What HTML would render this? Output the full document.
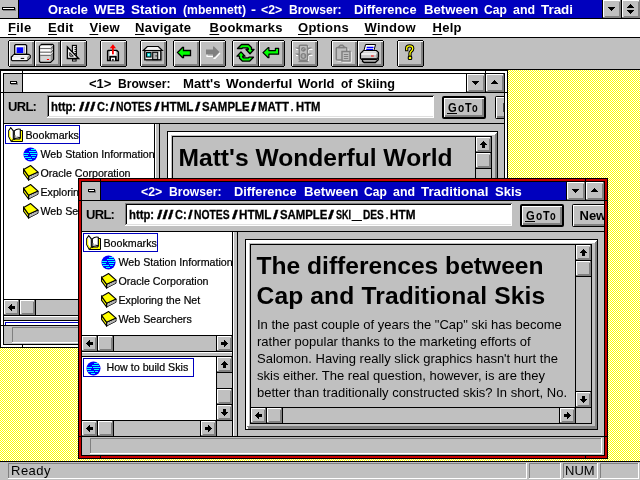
<!DOCTYPE html>
<html><head><meta charset="utf-8"><title>Oracle WEB Station</title>
<style>
html,body{margin:0;padding:0;}
body{width:640px;height:480px;overflow:hidden;position:relative;font-family:"Liberation Sans",sans-serif;background:#ffff80;}
#root{position:absolute;left:0;top:0;width:640px;height:480px;overflow:hidden;will-change:transform;}
#root div,#root i,#root span,#root svg{position:absolute;display:block;}
#mdi{left:0;top:70px;width:640px;height:391px;overflow:hidden;
 background-color:#ffff00;
 background-image:linear-gradient(45deg,#fff 25%,transparent 25%,transparent 75%,#fff 75%),linear-gradient(45deg,#fff 25%,transparent 25%,transparent 75%,#fff 75%);
 background-size:2px 2px;background-position:0 0,1px 1px;}
.rb{background:#c0c0c0;}
.clip{overflow:hidden;}
.child{overflow:hidden;}
.mt{top:19px;height:18px;line-height:18px;font-weight:bold;font-size:13px;color:#000;white-space:pre;letter-spacing:0.27px;}
.mt u{text-decoration:underline;text-decoration-thickness:1px;text-underline-offset:2px;}
.ttl{font-weight:bold;font-size:13px;white-space:pre;line-height:18px;height:18px;color:#fff;}
.ct{font-weight:bold;font-size:13px;white-space:pre;line-height:18px;height:18px;}
.lbl{font-weight:bold;font-size:13px;white-space:pre;line-height:18px;letter-spacing:-0.7px;}
.url{font-weight:bold;font-size:13px;white-space:pre;line-height:18px;}
.tt{font-size:10.67px;white-space:pre;line-height:19px;color:#000;-webkit-text-stroke:0.2px #000;}
.url{-webkit-text-stroke:0.3px #000;}
.tb{width:27px;height:27px;background:#000;}
.tbf{left:1px;top:1px;width:25px;height:25px;background:#c0c0c0;box-shadow:inset 1px 1px 0 #fff,inset -2px -2px 0 #808080;}
.tb svg{left:0;top:0;}
.pb{background:#000;border-radius:2px;}
.pbi{left:2px;top:2px;right:2px;bottom:2px;background:#c0c0c0;box-shadow:inset 1px 1px 0 #fff,inset -2px -2px 0 #808080;}
.pb span{left:6px;top:0;height:100%;white-space:pre;font-weight:bold;font-size:13px;line-height:23px;letter-spacing:-1px;}
.pb u,.pb2 u{text-decoration:underline;text-decoration-thickness:1px;text-underline-offset:1px;}
.gl{font-weight:bold;font-size:13px;line-height:23px;white-space:pre;}
.pb2{background:#000;border-radius:2px;}
.pbi2{left:1px;top:1px;right:1px;bottom:1px;background:#c0c0c0;box-shadow:inset 1px 1px 0 #fff,inset -2px -2px 0 #808080;}
.pb2 span{left:7.5px;top:0;height:100%;white-space:pre;font-weight:bold;font-size:13px;line-height:23px;letter-spacing:0px;}
.h1{font-weight:bold;font-size:24.6px;line-height:30px;white-space:pre;color:#000;}
.bd{font-size:13px;line-height:17.05px;white-space:pre;color:#000;}
.st{font-size:13px;line-height:16px;white-space:pre;color:#000;}
#ready{letter-spacing:0.5px;}
</style></head><body><div id="root">
<div style="left:0px;top:0px;width:640px;height:18px;background:#0000be;"></div>
<div style="left:0px;top:0px;width:18px;height:18px;background:#c0c0c0;"></div>
<div style="left:3px;top:8px;width:13px;height:3px;background:#808080;"></div><div style="left:2px;top:7px;width:13px;height:3px;background:#000;"></div><div style="left:3px;top:8px;width:11px;height:1px;background:#fff;"></div>
<div style="left:18px;top:0px;width:1px;height:18px;background:#000;"></div>
<span class="ttl" style="left:47.50px;top:0.5px;transform:scaleX(0.988);transform-origin:0 0">Oracle</span><span class="ttl" style="left:93.75px;top:0.5px;transform:scaleX(1.029);transform-origin:0 0">WEB</span><span class="ttl" style="left:130.50px;top:0.5px;transform:scaleX(1.038);transform-origin:0 0">Station</span><span class="ttl" style="left:182.50px;top:0.5px;transform:scaleX(0.938);transform-origin:0 0">(mbennett)</span><span class="ttl" style="left:251.25px;top:0.5px;transform:scaleX(1.148);transform-origin:0 0">-</span><span class="ttl" style="left:261.25px;top:0.5px;transform:scaleX(0.948);transform-origin:0 0">&lt;2&gt;</span><span class="ttl" style="left:288.75px;top:0.5px;transform:scaleX(0.932);transform-origin:0 0">Browser:</span><span class="ttl" style="left:353.75px;top:0.5px;transform:scaleX(0.983);transform-origin:0 0">Difference</span><span class="ttl" style="left:423.75px;top:0.5px;transform:scaleX(1.015);transform-origin:0 0">Between</span><span class="ttl" style="left:484.25px;top:0.5px;transform:scaleX(0.926);transform-origin:0 0">Cap</span><span class="ttl" style="left:513.00px;top:0.5px;transform:scaleX(0.951);transform-origin:0 0">and</span><span class="ttl" style="left:540.50px;top:0.5px;transform:scaleX(1.030);transform-origin:0 0">Tradi</span>
<div style="left:602px;top:0px;width:1px;height:18px;background:#000;"></div>
<div class="rb" style="left:603px;top:0px;width:18px;height:18px;"><i style="left:0;top:0;width:18px;height:1px;background:#fff"></i><i style="left:0;top:0;width:1px;height:18px;background:#fff"></i><i style="left:0px;top:17px;width:18px;height:1px;background:#808080"></i><i style="left:17px;top:0px;width:1px;height:18px;background:#808080"></i><i style="left:2px;top:16px;width:16px;height:1px;background:#808080"></i><i style="left:16px;top:2px;width:1px;height:16px;background:#808080"></i><i style="left:5px;top:7px;width:7px;height:1px;background:#000"></i><i style="left:6px;top:8px;width:5px;height:1px;background:#000"></i><i style="left:7px;top:9px;width:3px;height:1px;background:#000"></i><i style="left:8px;top:10px;width:1px;height:1px;background:#000"></i></div>
<div style="left:621px;top:0px;width:1px;height:18px;background:#000;"></div>
<div class="rb" style="left:622px;top:0px;width:18px;height:18px;"><i style="left:0;top:0;width:18px;height:1px;background:#fff"></i><i style="left:0;top:0;width:1px;height:18px;background:#fff"></i><i style="left:0px;top:17px;width:18px;height:1px;background:#808080"></i><i style="left:17px;top:0px;width:1px;height:18px;background:#808080"></i><i style="left:2px;top:16px;width:16px;height:1px;background:#808080"></i><i style="left:16px;top:2px;width:1px;height:16px;background:#808080"></i><i style="left:8px;top:4px;width:1px;height:1px;background:#000"></i><i style="left:7px;top:5px;width:3px;height:1px;background:#000"></i><i style="left:6px;top:6px;width:5px;height:1px;background:#000"></i><i style="left:5px;top:7px;width:7px;height:1px;background:#000"></i><i style="left:5px;top:10px;width:7px;height:1px;background:#000"></i><i style="left:6px;top:11px;width:5px;height:1px;background:#000"></i><i style="left:7px;top:12px;width:3px;height:1px;background:#000"></i><i style="left:8px;top:13px;width:1px;height:1px;background:#000"></i></div>
<div style="left:0px;top:18px;width:640px;height:1px;background:#000;"></div>
<div style="left:0px;top:19px;width:640px;height:18px;background:#fff;"></div>
<span class="mt" id="m0" style="left:8px"><u>F</u>ile</span>
<span class="mt" id="m1" style="left:48px"><u>E</u>dit</span>
<span class="mt" id="m2" style="left:89.5px"><u>V</u>iew</span>
<span class="mt" id="m3" style="left:135px"><u>N</u>avigate</span>
<span class="mt" id="m4" style="left:209.5px"><u>B</u>ookmarks</span>
<span class="mt" id="m5" style="left:298px"><u>O</u>ptions</span>
<span class="mt" id="m6" style="left:364.5px"><u>W</u>indow</span>
<span class="mt" id="m7" style="left:432.5px"><u>H</u>elp</span>
<div style="left:0px;top:37px;width:640px;height:1px;background:#000;"></div>
<div style="left:0px;top:38px;width:640px;height:31px;background:#c0c0c0;"></div>
<div class="tb" style="left:8px;top:40px"><div class="tbf"></div><svg width="27" height="27" viewBox="0 0 27 27"><path d="M6.700 5.500 L7.700 4.600 L17.600 4.600 L18.600 5.500 L18.600 14.300 L6.700 14.300 Z" fill="#fff" stroke="#000" stroke-width="1.300"/><path d="M16.300 6.500 L16.300 13.400 L8 13.400" fill="none" stroke="#b0b0b0" stroke-width="1.400"/><rect x="8.600" y="7.300" width="6.600" height="5.700" fill="#0000ff"/><path d="M3.400 17 L6.200 14.300 L20.800 14.300 L22.200 15.600 L22.200 17.600 L19 20.700 L4.300 20.700 L3.400 19.800 Z" fill="#e0e0e0" stroke="#000" stroke-width="1.300"/><path d="M19 17.200 L21.600 15 L21.600 17.600 L19 20.200 Z" fill="#909090"/><rect x="4.200" y="17.200" width="14.600" height="2.900" fill="#f8f8f8"/><path d="M5.500 15.800 L19.500 15.800" stroke="#fff" stroke-width="1"/><rect x="12.700" y="17.900" width="3.500" height="1" fill="#000"/></svg></div>
<div class="tb" style="left:34px;top:40px"><div class="tbf"></div><svg width="27" height="27" viewBox="0 0 27 27"><path d="M5.500 6.500 L7.500 4.500 L18.700 4.500 L19.600 5.400 L19.600 19.200 L16.500 22.400 L6.400 22.400 L5.500 21.500 Z" fill="#d4d4d4" stroke="#000" stroke-width="1.300"/><path d="M16.700 7 L19 4.800 L19 19 L16.700 21.600 Z" fill="#909090"/><rect x="6.200" y="5.600" width="10.400" height="2.200" fill="#fff"/><rect x="6.200" y="9.300" width="10.400" height="2.200" fill="#fff"/><rect x="6.200" y="13" width="10.400" height="1.600" fill="#fff"/><path d="M6.200 8.500 L16.600 8.500 L19 6.200 M6.200 12.200 L16.600 12.200 L19 9.900 M6.200 15.400 L16.600 15.400 L19 13.200" stroke="#606060" stroke-width="0.900" fill="none"/><path d="M16.600 7.500 L19 5.200 M16.600 11.200 L19 8.900 M16.600 14.500 L19 12.200" stroke="#fff" stroke-width="0.700"/><rect x="12.900" y="19" width="2.200" height="1" fill="#ff0000"/></svg></div>
<div class="tb" style="left:60px;top:40px"><div class="tbf"></div><svg width="27" height="27" viewBox="0 0 27 27"><rect x="12.400" y="5.400" width="4" height="13" fill="#e8e8e8" stroke="#000" stroke-width="1.100"/><path d="M14.500 7.500h1.800M14.500 9.500h1.800M14.500 11.500h1.800M14.500 13.500h1.800" stroke="#000" stroke-width="0.900"/><path d="M7.400 7 L7.400 18.500 L18.600 18.500 Z" fill="#fff" stroke="#000" stroke-width="1.400"/><path d="M9.800 12.500 L9.800 16.200 L13.400 16.200 Z" fill="#c0c0c0" stroke="#000" stroke-width="0.900"/><rect x="12.500" y="19.200" width="3.600" height="1.800" fill="#fff" stroke="#000" stroke-width="1"/></svg></div>
<div class="tb" style="left:100px;top:40px"><div class="tbf"></div><svg width="27" height="27" viewBox="0 0 27 27"><path d="M7.600 11 L8.200 10.500 L16.800 10.500 L18.400 12 L18.400 20.500 L7.600 20.500 Z" fill="#c0c0c0" stroke="#000" stroke-width="1.400"/><rect x="9.800" y="11" width="6" height="4.200" fill="#fff"/><rect x="9.300" y="16" width="7.400" height="4.800" fill="#000"/><rect x="11" y="17.600" width="4" height="3" fill="#fff"/><rect x="12.200" y="19" width="1.400" height="1.800" fill="#000"/><rect x="12" y="7" width="1.800" height="7.300" fill="#ff0000"/><path d="M12.900 4.300 L16 8.200 L9.800 8.200 Z" fill="#ff0000"/></svg></div>
<div class="tb" style="left:140px;top:40px"><div class="tbf"></div><svg width="27" height="27" viewBox="0 0 27 27"><path d="M6 20.800 L21.800 20.800 L21.800 12" fill="none" stroke="#808080" stroke-width="1"/><path d="M3.300 10.500 L7.300 6.500 L18.300 6.500 L22.300 10.500 Z" fill="#f0f0f0" stroke="#000" stroke-width="1.200"/><rect x="4.800" y="10.600" width="16" height="9.200" fill="#f0f0f0" stroke="#000" stroke-width="1.300"/><rect x="6.600" y="12.600" width="4.400" height="4.400" fill="#00e8e8" stroke="#000" stroke-width="1.100"/><rect x="8.100" y="14.100" width="1.400" height="1.400" fill="#fff"/><rect x="12.700" y="12.300" width="5" height="7.300" fill="#b4b4b4" stroke="#000" stroke-width="1.100"/><rect x="15.600" y="15.300" width="1" height="1.200" fill="#000"/></svg></div>
<div class="tb" style="left:173px;top:40px"><div class="tbf"></div><svg width="27" height="27" viewBox="0 0 27 27"><path d="M4.500 12.500 L9.500 7.500 L10.500 7.500 L10.500 10.500 L17.500 10.500 L17.500 15.500 L10.500 15.500 L10.500 17.500 L9.500 17.500 Z" fill="#00ff00" stroke="#000" stroke-width="1.3"/></svg></div>
<div class="tb" style="left:199px;top:40px"><div class="tbf"></div><svg width="27" height="27" viewBox="0 0 27 27"><path d="M21 13 L16 18.500 L15 18.500 L15 16.500 L8 16.500 L8 14" fill="none" stroke="#fff" stroke-width="1.2"/><path d="M20.500 12 L15 6.500 L14 6.500 L14 9.500 L7 9.500 L7 14.500 L14 14.500 L14 17.500 L15 17.500 Z" fill="#808080"/></svg></div>
<div class="tb" style="left:232px;top:40px"><div class="tbf"></div><svg width="27" height="27" viewBox="0 0 27 27"><path d="M5.5 8.5 L9.5 4.5 L16.5 4.5 L19.5 7.5 L19.5 9.5 L22.0 9.5 L18.0 13.8 L14.0 9.5 L16.3 9.5 L16.3 8.6 L15.4 7.8 L10.8 7.8 L10.0 8.5 Z" fill="#00ff00" stroke="#000" stroke-width="1.3" stroke-linejoin="round"/><path d="M21.5 17.2 L17.5 21.2 L10.5 21.2 L7.5 18.2 L7.5 16.2 L5.0 16.2 L9.0 11.9 L13.0 16.2 L10.7 16.2 L10.7 17.1 L11.6 17.9 L16.2 17.9 L17.0 17.2 Z" fill="#00ff00" stroke="#000" stroke-width="1.3" stroke-linejoin="round"/></svg></div>
<div class="tb" style="left:258px;top:40px"><div class="tbf"></div><svg width="27" height="27" viewBox="0 0 27 27"><path d="M5.0 12.6 L10.2 7.6 L10.9 7.6 L10.9 10.6 L17.4 10.6 L17.4 8.3 L20.6 8.3 L20.6 14.2 L10.9 14.2 L10.9 17.7 L10.2 17.7 Z" fill="#00ff00" stroke="#000" stroke-width="1.2" stroke-linejoin="round"/></svg></div>
<div class="tb" style="left:291px;top:40px"><div class="tbf"></div><svg width="27" height="27" viewBox="0 0 27 27"><g transform="translate(1,1)" fill="none" stroke="#fff" stroke-width="1.200"><rect x="8.300" y="5.300" width="8.200" height="15" rx="1"/><path d="M4 8.500h4M4 14.500h4M17 8.500h3.500M17 14.500h3.500"/></g><rect x="8.300" y="5.300" width="8.200" height="15" rx="1" fill="#c0c0c0" stroke="#808080" stroke-width="1.500"/><circle cx="12.400" cy="9.300" r="2.400" fill="#808080"/><path d="M11.200 10 L13.500 8" stroke="#c0c0c0" stroke-width="0.800"/><circle cx="12.400" cy="16" r="2.300" fill="#c0c0c0" stroke="#808080" stroke-width="1.200"/><path d="M11.400 15.300h0.900M13 15.300h0.900M11.400 16.900h0.900M13 16.900h0.900" stroke="#808080" stroke-width="0.900"/><path d="M4 7.500h4l0 2.300zM4 13.500h4l0 2.300zM21 7.500h-4l0 2.300zM21 13.500h-4l0 2.300z" fill="#808080"/><path d="M7.500 21.500h10" stroke="#808080" stroke-width="1.300"/></svg></div>
<div class="tb" style="left:331px;top:40px"><div class="tbf"></div><svg width="27" height="27" viewBox="0 0 27 27"><g transform="translate(1,1)" fill="none" stroke="#fff" stroke-width="1.200"><rect x="5.300" y="7.500" width="10.500" height="12.500" rx="1"/><rect x="11" y="11.500" width="8" height="9.500"/></g><rect x="5.300" y="7.500" width="10.500" height="12.500" rx="1" fill="#c0c0c0" stroke="#808080" stroke-width="1.500"/><path d="M8 7.500 L8 6.500 L9.500 5.200 L11.600 5.200 L13 6.500 L13 7.500 Z" fill="#c0c0c0" stroke="#808080" stroke-width="1.400"/><rect x="11" y="11.500" width="8" height="9.500" fill="#c0c0c0" stroke="#808080" stroke-width="1.500"/><path d="M12.800 14.500h4.500M12.800 16.500h4.500M12.800 18.500h4.500" stroke="#808080" stroke-width="1.100"/></svg></div>
<div class="tb" style="left:357px;top:40px"><div class="tbf"></div><svg width="27" height="27" viewBox="0 0 27 27"><path d="M5.500 19.500 L5.500 21.300 L7.200 22.500 L18.300 22.500 L21.300 19.700 L21.300 17.500" fill="#b0b0b0" stroke="#000" stroke-width="1.300"/><path d="M8.600 4.500 L18.600 4.500 L16.600 11.500 L6.600 11.500 Z" fill="#fff" stroke="#000" stroke-width="1"/><path d="M9.700 7.300h6.800M9.200 9.400h6.800" stroke="#0000ff" stroke-width="1.200"/><path d="M3.500 13.500 L6.500 10.500 L19.500 10.500 L21.500 12.500 L21.500 17 L19.300 19.300 L4.500 19.300 L3.500 18.300 Z" fill="#c8c8c8" stroke="#000" stroke-width="1.200"/><path d="M4.300 14h15" stroke="#fff" stroke-width="1.300"/><path d="M6.800 11.800h12" stroke="#e8e8e8" stroke-width="1.200"/><path d="M19.500 14 L21 12.600 L21 16.800 L19.500 18.500 Z" fill="#808080"/><rect x="14" y="15.500" width="2.800" height="1" fill="#ff0000"/><path d="M4.500 18.900h15" stroke="#000" stroke-width="1.300"/></svg></div>
<div class="tb" style="left:397px;top:40px"><div class="tbf"></div><svg width="27" height="27" viewBox="0 0 27 27"><path d="M9.700 9.500 L9.700 8.200 Q9.700 5.800 12.700 5.800 Q15.700 5.800 15.700 8.400 Q15.700 10 14.200 11.300 Q13 12.300 13 13.600 L13 15" fill="none" stroke="#000" stroke-width="3.300" stroke-linecap="square"/><path d="M9.700 9.500 L9.700 8.200 Q9.700 5.800 12.700 5.800 Q15.700 5.800 15.700 8.400 Q15.700 10 14.200 11.300 Q13 12.300 13 13.600 L13 15" fill="none" stroke="#ffff00" stroke-width="1.300" stroke-linecap="square"/><rect x="11.300" y="16.300" width="3.400" height="3.200" rx="0.800" fill="#ffff00" stroke="#000" stroke-width="1.100"/></svg></div>
<div style="left:8px;top:40px;width:1px;height:1px;background:#c0c0c0;"></div>
<div style="left:8px;top:66px;width:1px;height:1px;background:#c0c0c0;"></div>
<div style="left:86px;top:40px;width:1px;height:1px;background:#c0c0c0;"></div>
<div style="left:86px;top:66px;width:1px;height:1px;background:#c0c0c0;"></div>
<div style="left:100px;top:40px;width:1px;height:1px;background:#c0c0c0;"></div>
<div style="left:100px;top:66px;width:1px;height:1px;background:#c0c0c0;"></div>
<div style="left:126px;top:40px;width:1px;height:1px;background:#c0c0c0;"></div>
<div style="left:126px;top:66px;width:1px;height:1px;background:#c0c0c0;"></div>
<div style="left:140px;top:40px;width:1px;height:1px;background:#c0c0c0;"></div>
<div style="left:140px;top:66px;width:1px;height:1px;background:#c0c0c0;"></div>
<div style="left:166px;top:40px;width:1px;height:1px;background:#c0c0c0;"></div>
<div style="left:166px;top:66px;width:1px;height:1px;background:#c0c0c0;"></div>
<div style="left:173px;top:40px;width:1px;height:1px;background:#c0c0c0;"></div>
<div style="left:173px;top:66px;width:1px;height:1px;background:#c0c0c0;"></div>
<div style="left:225px;top:40px;width:1px;height:1px;background:#c0c0c0;"></div>
<div style="left:225px;top:66px;width:1px;height:1px;background:#c0c0c0;"></div>
<div style="left:232px;top:40px;width:1px;height:1px;background:#c0c0c0;"></div>
<div style="left:232px;top:66px;width:1px;height:1px;background:#c0c0c0;"></div>
<div style="left:284px;top:40px;width:1px;height:1px;background:#c0c0c0;"></div>
<div style="left:284px;top:66px;width:1px;height:1px;background:#c0c0c0;"></div>
<div style="left:291px;top:40px;width:1px;height:1px;background:#c0c0c0;"></div>
<div style="left:291px;top:66px;width:1px;height:1px;background:#c0c0c0;"></div>
<div style="left:317px;top:40px;width:1px;height:1px;background:#c0c0c0;"></div>
<div style="left:317px;top:66px;width:1px;height:1px;background:#c0c0c0;"></div>
<div style="left:331px;top:40px;width:1px;height:1px;background:#c0c0c0;"></div>
<div style="left:331px;top:66px;width:1px;height:1px;background:#c0c0c0;"></div>
<div style="left:383px;top:40px;width:1px;height:1px;background:#c0c0c0;"></div>
<div style="left:383px;top:66px;width:1px;height:1px;background:#c0c0c0;"></div>
<div style="left:397px;top:40px;width:1px;height:1px;background:#c0c0c0;"></div>
<div style="left:397px;top:66px;width:1px;height:1px;background:#c0c0c0;"></div>
<div style="left:423px;top:40px;width:1px;height:1px;background:#c0c0c0;"></div>
<div style="left:423px;top:66px;width:1px;height:1px;background:#c0c0c0;"></div>
<div style="left:0px;top:69px;width:640px;height:1px;background:#000;"></div>
<div id="mdi">
<div class="child" style="left:0px;top:0px;width:508px;height:278px;background:#000"><div style="left:1px;top:1px;width:506px;height:276px;background:#fff;"></div><div style="left:3px;top:3px;width:502px;height:272px;background:#000;"></div><div style="left:22px;top:1px;width:1px;height:2px;background:#000;"></div><div style="left:22px;top:275px;width:1px;height:2px;background:#000;"></div><div style="left:485px;top:1px;width:1px;height:2px;background:#000;"></div><div style="left:485px;top:275px;width:1px;height:2px;background:#000;"></div><div style="left:1px;top:22px;width:2px;height:1px;background:#000;"></div><div style="left:505px;top:22px;width:2px;height:1px;background:#000;"></div><div style="left:1px;top:255px;width:2px;height:1px;background:#000;"></div><div style="left:505px;top:255px;width:2px;height:1px;background:#000;"></div><div class="clip" style="left:4px;top:4px;width:500px;height:270px"><div style="left:-4px;top:-4px;width:508px;height:278px"><div style="left:4px;top:4px;width:500px;height:270px;background:#c0c0c0;"></div><div style="left:4px;top:4px;width:18px;height:18px;background:#c0c0c0;"></div><div style="left:11px;top:12px;width:7px;height:3px;background:#808080;"></div><div style="left:10px;top:11px;width:7px;height:3px;background:#000;"></div><div style="left:11px;top:12px;width:5px;height:1px;background:#fff;"></div><div style="left:22px;top:4px;width:1px;height:18px;background:#000;"></div><div style="left:23px;top:4px;width:443px;height:18px;background:#fff;"></div><span class="ct" style="color:#000;left:88.75px;top:4.7px;transform:scaleX(1.003);transform-origin:0 0">&lt;1&gt;</span><span class="ct" style="color:#000;left:117.50px;top:4.7px;transform:scaleX(0.932);transform-origin:0 0">Browser:</span><span class="ct" style="color:#000;left:182.50px;top:4.7px;transform:scaleX(1.012);transform-origin:0 0">Matt's</span><span class="ct" style="color:#000;left:226.25px;top:4.7px;transform:scaleX(1.035);transform-origin:0 0">Wonderful</span><span class="ct" style="color:#000;left:298.00px;top:4.7px;transform:scaleX(0.997);transform-origin:0 0">World</span><span class="ct" style="color:#000;left:341.25px;top:4.7px;transform:scaleX(0.916);transform-origin:0 0">of</span><span class="ct" style="color:#000;left:357.00px;top:4.7px;transform:scaleX(0.974);transform-origin:0 0">Skiing</span><div style="left:466px;top:4px;width:1px;height:18px;background:#000;"></div><div class="rb" style="left:467px;top:4px;width:18px;height:18px;"><i style="left:0;top:0;width:18px;height:1px;background:#fff"></i><i style="left:0;top:0;width:1px;height:18px;background:#fff"></i><i style="left:0px;top:17px;width:18px;height:1px;background:#808080"></i><i style="left:17px;top:0px;width:1px;height:18px;background:#808080"></i><i style="left:2px;top:16px;width:16px;height:1px;background:#808080"></i><i style="left:16px;top:2px;width:1px;height:16px;background:#808080"></i><i style="left:5px;top:7px;width:7px;height:1px;background:#000"></i><i style="left:6px;top:8px;width:5px;height:1px;background:#000"></i><i style="left:7px;top:9px;width:3px;height:1px;background:#000"></i><i style="left:8px;top:10px;width:1px;height:1px;background:#000"></i></div><div style="left:485px;top:4px;width:1px;height:18px;background:#000;"></div><div class="rb" style="left:486px;top:4px;width:18px;height:18px;"><i style="left:0;top:0;width:18px;height:1px;background:#fff"></i><i style="left:0;top:0;width:1px;height:18px;background:#fff"></i><i style="left:0px;top:17px;width:18px;height:1px;background:#808080"></i><i style="left:17px;top:0px;width:1px;height:18px;background:#808080"></i><i style="left:2px;top:16px;width:16px;height:1px;background:#808080"></i><i style="left:16px;top:2px;width:1px;height:16px;background:#808080"></i><i style="left:8px;top:6px;width:1px;height:1px;background:#000"></i><i style="left:7px;top:7px;width:3px;height:1px;background:#000"></i><i style="left:6px;top:8px;width:5px;height:1px;background:#000"></i><i style="left:5px;top:9px;width:7px;height:1px;background:#000"></i></div><div style="left:4px;top:22px;width:500px;height:1px;background:#000;"></div><span class="lbl" style="left:8px;top:28px">URL:</span><div style="left:47px;top:25px;width:387px;height:23px;background:#808080;"></div><div style="left:48px;top:26px;width:386px;height:22px;background:#000;"></div><div style="left:49px;top:27px;width:385px;height:21px;background:#fff;"></div><div style="left:48px;top:46px;width:386px;height:1px;background:#dfdfdf;"></div><div style="left:47px;top:47px;width:387px;height:1px;background:#fff;"></div><div style="left:433px;top:26px;width:1px;height:22px;background:#fff;"></div><div style="left:49px;top:27px;width:384px;height:19px;background:#fff;"></div><span class="url" style="left:51.30px;top:28px;transform:scaleX(0.870);transform-origin:0 0">http:</span><span class="url" style="left:78.60px;top:28px;transform:scaleX(1.511);transform-origin:0 0">///</span><span class="url" style="left:96.60px;top:28px;transform:scaleX(0.846);transform-origin:0 0">C:</span><span class="url" style="left:110.00px;top:28px;transform:scaleX(1.291);transform-origin:0 0">/</span><span class="url" style="left:116.30px;top:28px;transform:scaleX(0.797);transform-origin:0 0">NOTES</span><span class="url" style="left:153.70px;top:28px;transform:scaleX(1.621);transform-origin:0 0">/</span><span class="url" style="left:161.30px;top:28px;transform:scaleX(0.901);transform-origin:0 0">HTML</span><span class="url" style="left:195.00px;top:28px;transform:scaleX(1.484);transform-origin:0 0">/</span><span class="url" style="left:202.00px;top:28px;transform:scaleX(0.879);transform-origin:0 0">SAMPLE</span><span class="url" style="left:250.70px;top:28px;transform:scaleX(1.511);transform-origin:0 0">/</span><span class="url" style="left:258.00px;top:28px;transform:scaleX(0.882);transform-origin:0 0">MATT</span><span class="url" style="left:291.20px;top:28px;transform:scaleX(0.604);transform-origin:0 0">.</span><span class="url" style="left:295.60px;top:28px;transform:scaleX(0.867);transform-origin:0 0">HTM</span><div class="pb" style="left:442px;top:26px;width:44px;height:23px"><div class="pbi"></div><span class="gl" style="left:5.90px;top:0px;transform:scaleX(0.858);transform-origin:0 0">G</span><span class="gl" style="left:15.90px;top:0px;transform:scaleX(0.782);transform-origin:0 0">o</span><span class="gl" style="left:23.00px;top:0px;transform:scaleX(0.832);transform-origin:0 0">T</span><span class="gl" style="left:30.25px;top:0px;transform:scaleX(0.712);transform-origin:0 0">o</span><i style="left:5px;top:17px;width:10px;height:1px;background:#000"></i></div><div class="pb2" style="left:495px;top:26px;width:44px;height:23px"><div class="pbi2"></div><span>New</span></div><div style="left:4px;top:53px;width:500px;height:1px;background:#000;"></div><div style="left:4px;top:54px;width:150px;height:175px;background:#fff;"></div><div class="clip" style="left:4px;top:54px;width:150px;height:175px"><div style="left:1px;top:1px;width:73px;height:17px;border:1px solid #0000c0;background:#fff"></div><svg class="ic" style="left:4px;top:3px" width="16" height="16" viewBox="0 0 16 16"><path d="M12 3.500 L14.500 3.500 L14.500 14.500 L3.500 14.500 L3 12 L12 12 Z" fill="#ffff00" stroke="#000" stroke-width="1"/><path d="M0.700 3.500 L2.700 0.700 L5.300 3.800 L5.300 12 L3.200 14.300 L0.700 9.500 Z" fill="#fff" stroke="#000" stroke-width="1.100"/><path d="M1.700 4 L1.700 9.300 L3.400 12.600 L4.600 11.600" fill="none" stroke="#ffff00" stroke-width="1.100"/><path d="M6.300 3.800 Q9 1.300 12.300 2.300 L12.300 10.800 Q9 10 6.300 12.200 Z" fill="#fff" stroke="#000" stroke-width="1.100"/><path d="M7.300 8 L7.300 10.500 L10.500 9.700" fill="none" stroke="#b0b0b0" stroke-width="1.200"/></svg><span class="tt" style="left:21.5px;top:1.7px;font-size:10.67px;letter-spacing:0px">Bookmarks</span><svg class="ic" style="left:18.5px;top:22.5px" width="15" height="15" viewBox="0 0 15 15"><circle cx="7.5" cy="7.5" r="7" fill="#0000ff"/><g stroke="#00ffff" stroke-width="1"><path d="M8 2.5h4M6 4.5h7M1 6.5h5M7 6.5h7M1 8.5h4M8 8.5h5M2 10.5h6M9 10.5h3M5 12.5h4"/></g></svg><span class="tt" style="left:36.5px;top:20.7px;font-size:10.67px;letter-spacing:0px">Web Station Information</span><svg class="ic" style="left:19px;top:41px" width="16" height="16" viewBox="0 0 16 16"><path d="M5.600 11.300 L15 7 L15 10.200 L5.600 15 Z" fill="#fff" stroke="#000" stroke-width="1"/><path d="M6.200 12.700 L14.600 8.700 M6.200 14 L14.600 9.900" stroke="#909090" stroke-width="0.900" fill="none"/><path d="M0.600 4.400 L5.600 11.300 L5.600 15 L0.600 8.300 Z" fill="#ffff00" stroke="#000" stroke-width="1.100"/><path d="M0.600 4.400 L7.600 0.500 L15 7 L5.600 11.300 Z" fill="#ffff00" stroke="#000" stroke-width="1.100"/></svg><span class="tt" style="left:36.5px;top:39.7px;font-size:10.67px;letter-spacing:0px">Oracle Corporation</span><svg class="ic" style="left:19px;top:60px" width="16" height="16" viewBox="0 0 16 16"><path d="M5.600 11.300 L15 7 L15 10.200 L5.600 15 Z" fill="#fff" stroke="#000" stroke-width="1"/><path d="M6.200 12.700 L14.600 8.700 M6.200 14 L14.600 9.900" stroke="#909090" stroke-width="0.900" fill="none"/><path d="M0.600 4.400 L5.600 11.300 L5.600 15 L0.600 8.300 Z" fill="#ffff00" stroke="#000" stroke-width="1.100"/><path d="M0.600 4.400 L7.600 0.500 L15 7 L5.600 11.300 Z" fill="#ffff00" stroke="#000" stroke-width="1.100"/></svg><span class="tt" style="left:36.5px;top:58.7px;font-size:10.67px;letter-spacing:0px">Exploring the Net</span><svg class="ic" style="left:19px;top:79px" width="16" height="16" viewBox="0 0 16 16"><path d="M5.600 11.300 L15 7 L15 10.200 L5.600 15 Z" fill="#fff" stroke="#000" stroke-width="1"/><path d="M6.200 12.700 L14.600 8.700 M6.200 14 L14.600 9.900" stroke="#909090" stroke-width="0.900" fill="none"/><path d="M0.600 4.400 L5.600 11.300 L5.600 15 L0.600 8.300 Z" fill="#ffff00" stroke="#000" stroke-width="1.100"/><path d="M0.600 4.400 L7.600 0.500 L15 7 L5.600 11.300 Z" fill="#ffff00" stroke="#000" stroke-width="1.100"/></svg><span class="tt" style="left:36.5px;top:77.7px;font-size:10.67px;letter-spacing:0px">Web Searchers</span></div><div style="left:4px;top:229px;width:150px;height:1px;background:#000;"></div><div style="left:4px;top:230px;width:150px;height:15px;background:#c0c0c0;"></div><div class="rb" style="left:4px;top:230px;width:15px;height:15px;"><i style="left:0;top:0;width:15px;height:1px;background:#fff"></i><i style="left:0;top:0;width:1px;height:15px;background:#fff"></i><i style="left:0px;top:14px;width:15px;height:1px;background:#808080"></i><i style="left:14px;top:0px;width:1px;height:15px;background:#808080"></i><i style="left:2px;top:13px;width:13px;height:1px;background:#808080"></i><i style="left:13px;top:2px;width:1px;height:13px;background:#808080"></i><i style="left:4px;top:7px;width:1px;height:1px;background:#000"></i><i style="left:5px;top:6px;width:1px;height:3px;background:#000"></i><i style="left:6px;top:5px;width:1px;height:5px;background:#000"></i><i style="left:7px;top:4px;width:1px;height:7px;background:#000"></i><i style="left:8px;top:6px;width:1px;height:3px;background:#000"></i><i style="left:9px;top:6px;width:1px;height:3px;background:#000"></i><i style="left:10px;top:6px;width:1px;height:3px;background:#000"></i></div><div style="left:19px;top:230px;width:1px;height:15px;background:#000;"></div><div class="rb" style="left:20px;top:230px;width:15px;height:15px;"><i style="left:0;top:0;width:15px;height:1px;background:#fff"></i><i style="left:0;top:0;width:1px;height:15px;background:#fff"></i><i style="left:0px;top:14px;width:15px;height:1px;background:#808080"></i><i style="left:14px;top:0px;width:1px;height:15px;background:#808080"></i><i style="left:2px;top:13px;width:13px;height:1px;background:#808080"></i><i style="left:13px;top:2px;width:1px;height:13px;background:#808080"></i></div><div style="left:35px;top:230px;width:1px;height:15px;background:#000;"></div><div style="left:138px;top:230px;width:1px;height:15px;background:#000;"></div><div class="rb" style="left:139px;top:230px;width:15px;height:15px;"><i style="left:0;top:0;width:15px;height:1px;background:#fff"></i><i style="left:0;top:0;width:1px;height:15px;background:#fff"></i><i style="left:0px;top:14px;width:15px;height:1px;background:#808080"></i><i style="left:14px;top:0px;width:1px;height:15px;background:#808080"></i><i style="left:2px;top:13px;width:13px;height:1px;background:#808080"></i><i style="left:13px;top:2px;width:1px;height:13px;background:#808080"></i><i style="left:10px;top:7px;width:1px;height:1px;background:#000"></i><i style="left:9px;top:6px;width:1px;height:3px;background:#000"></i><i style="left:8px;top:5px;width:1px;height:5px;background:#000"></i><i style="left:7px;top:4px;width:1px;height:7px;background:#000"></i><i style="left:6px;top:6px;width:1px;height:3px;background:#000"></i><i style="left:5px;top:6px;width:1px;height:3px;background:#000"></i><i style="left:4px;top:6px;width:1px;height:3px;background:#000"></i></div><div style="left:4px;top:245px;width:150px;height:1px;background:#000;"></div><div style="left:4px;top:246px;width:150px;height:1px;background:#fff;"></div><div style="left:4px;top:247px;width:150px;height:3px;background:#c0c0c0;"></div><div style="left:4px;top:250px;width:150px;height:1px;background:#000;"></div><div class="clip" style="left:4px;top:251px;width:150px;height:4px;background:#fff"><div style="left:1px;top:1px;width:109px;height:17px;border:1px solid #0000c0"></div><svg class="ic" style="left:3.5px;top:3.5px" width="15" height="15" viewBox="0 0 15 15"><circle cx="7.5" cy="7.5" r="7" fill="#0000ff"/><g stroke="#00ffff" stroke-width="1"><path d="M8 2.5h4M6 4.5h7M1 6.5h5M7 6.5h7M1 8.5h4M8 8.5h5M2 10.5h6M9 10.5h3M5 12.5h4"/></g></svg><span class="tt" style="left:24.5px;top:1.2px;font-size:10.67px">How to build Skis</span></div><div style="left:4px;top:255px;width:500px;height:1px;background:#000;"></div><div style="left:4px;top:256px;width:500px;height:18px;background:#c0c0c0;"></div><div style="left:12px;top:257px;width:490px;height:1px;background:#808080;"></div><div style="left:12px;top:257px;width:1px;height:16px;background:#808080;"></div><div style="left:12px;top:272px;width:490px;height:1px;background:#fff;"></div><div style="left:501px;top:257px;width:1px;height:16px;background:#fff;"></div><div style="left:154px;top:54px;width:1px;height:201px;background:#000;"></div><div style="left:155px;top:54px;width:1px;height:201px;background:#fff;"></div><div style="left:156px;top:54px;width:3px;height:201px;background:#c0c0c0;"></div><div style="left:159px;top:54px;width:1px;height:201px;background:#000;"></div><div style="left:160px;top:54px;width:344px;height:201px;background:#c0c0c0;"></div><div class="clip" style="left:167px;top:61px;width:331px;height:188px;background:#000"><div style="left:1px;top:1px;width:329px;height:186px;background:#c0c0c0;"></div><div style="left:1px;top:1px;width:329px;height:3px;background:#fff;"></div><div style="left:1px;top:1px;width:3px;height:186px;background:#fff;"></div><div style="left:328px;top:2px;width:2px;height:185px;background:#808080;"></div><div style="left:2px;top:184px;width:328px;height:3px;background:#808080;"></div><div style="left:328px;top:1px;width:2px;height:1px;background:#fff;"></div><div style="left:328px;top:2px;width:1px;height:1px;background:#fff;"></div><div style="left:1px;top:184px;width:1px;height:3px;background:#fff;"></div><div style="left:2px;top:185px;width:1px;height:2px;background:#fff;"></div><div style="left:5px;top:5px;width:320px;height:177px;background:#000;"></div><div style="left:6px;top:6px;width:318px;height:175px;background:#c0c0c0;"></div><div class="clip" style="left:6px;top:6px;width:302px;height:159px;background:#c0c0c0"><span class="h1" style="left:5.5px;top:6px">Matt's Wonderful World</span></div><div style="left:308px;top:6px;width:1px;height:175px;background:#000;"></div><div style="left:309px;top:6px;width:15px;height:159px;background:#c0c0c0;"></div><div class="rb" style="left:309px;top:6px;width:15px;height:15px;"><i style="left:0;top:0;width:15px;height:1px;background:#fff"></i><i style="left:0;top:0;width:1px;height:15px;background:#fff"></i><i style="left:0px;top:14px;width:15px;height:1px;background:#808080"></i><i style="left:14px;top:0px;width:1px;height:15px;background:#808080"></i><i style="left:2px;top:13px;width:13px;height:1px;background:#808080"></i><i style="left:13px;top:2px;width:1px;height:13px;background:#808080"></i><i style="left:7px;top:4px;width:1px;height:1px;background:#000"></i><i style="left:6px;top:5px;width:3px;height:1px;background:#000"></i><i style="left:5px;top:6px;width:5px;height:1px;background:#000"></i><i style="left:4px;top:7px;width:7px;height:1px;background:#000"></i><i style="left:6px;top:8px;width:3px;height:1px;background:#000"></i><i style="left:6px;top:9px;width:3px;height:1px;background:#000"></i><i style="left:6px;top:10px;width:3px;height:1px;background:#000"></i></div><div style="left:309px;top:21px;width:15px;height:1px;background:#000;"></div><div class="rb" style="left:309px;top:22px;width:15px;height:15px;"><i style="left:0;top:0;width:15px;height:1px;background:#fff"></i><i style="left:0;top:0;width:1px;height:15px;background:#fff"></i><i style="left:0px;top:14px;width:15px;height:1px;background:#808080"></i><i style="left:14px;top:0px;width:1px;height:15px;background:#808080"></i><i style="left:2px;top:13px;width:13px;height:1px;background:#808080"></i><i style="left:13px;top:2px;width:1px;height:13px;background:#808080"></i></div><div style="left:309px;top:37px;width:15px;height:1px;background:#000;"></div><div style="left:309px;top:149px;width:15px;height:1px;background:#000;"></div><div class="rb" style="left:309px;top:150px;width:15px;height:15px;"><i style="left:0;top:0;width:15px;height:1px;background:#fff"></i><i style="left:0;top:0;width:1px;height:15px;background:#fff"></i><i style="left:0px;top:14px;width:15px;height:1px;background:#808080"></i><i style="left:14px;top:0px;width:1px;height:15px;background:#808080"></i><i style="left:2px;top:13px;width:13px;height:1px;background:#808080"></i><i style="left:13px;top:2px;width:1px;height:13px;background:#808080"></i><i style="left:7px;top:10px;width:1px;height:1px;background:#000"></i><i style="left:6px;top:9px;width:3px;height:1px;background:#000"></i><i style="left:5px;top:8px;width:5px;height:1px;background:#000"></i><i style="left:4px;top:7px;width:7px;height:1px;background:#000"></i><i style="left:6px;top:6px;width:3px;height:1px;background:#000"></i><i style="left:6px;top:5px;width:3px;height:1px;background:#000"></i><i style="left:6px;top:4px;width:3px;height:1px;background:#000"></i></div><div style="left:6px;top:165px;width:318px;height:1px;background:#000;"></div><div style="left:6px;top:166px;width:302px;height:15px;background:#c0c0c0;"></div><div class="rb" style="left:6px;top:166px;width:15px;height:15px;"><i style="left:0;top:0;width:15px;height:1px;background:#fff"></i><i style="left:0;top:0;width:1px;height:15px;background:#fff"></i><i style="left:0px;top:14px;width:15px;height:1px;background:#808080"></i><i style="left:14px;top:0px;width:1px;height:15px;background:#808080"></i><i style="left:2px;top:13px;width:13px;height:1px;background:#808080"></i><i style="left:13px;top:2px;width:1px;height:13px;background:#808080"></i><i style="left:4px;top:7px;width:1px;height:1px;background:#000"></i><i style="left:5px;top:6px;width:1px;height:3px;background:#000"></i><i style="left:6px;top:5px;width:1px;height:5px;background:#000"></i><i style="left:7px;top:4px;width:1px;height:7px;background:#000"></i><i style="left:8px;top:6px;width:1px;height:3px;background:#000"></i><i style="left:9px;top:6px;width:1px;height:3px;background:#000"></i><i style="left:10px;top:6px;width:1px;height:3px;background:#000"></i></div><div style="left:21px;top:166px;width:1px;height:15px;background:#000;"></div><div class="rb" style="left:22px;top:166px;width:15px;height:15px;"><i style="left:0;top:0;width:15px;height:1px;background:#fff"></i><i style="left:0;top:0;width:1px;height:15px;background:#fff"></i><i style="left:0px;top:14px;width:15px;height:1px;background:#808080"></i><i style="left:14px;top:0px;width:1px;height:15px;background:#808080"></i><i style="left:2px;top:13px;width:13px;height:1px;background:#808080"></i><i style="left:13px;top:2px;width:1px;height:13px;background:#808080"></i></div><div style="left:37px;top:166px;width:1px;height:15px;background:#000;"></div><div style="left:292px;top:166px;width:1px;height:15px;background:#000;"></div><div class="rb" style="left:293px;top:166px;width:15px;height:15px;"><i style="left:0;top:0;width:15px;height:1px;background:#fff"></i><i style="left:0;top:0;width:1px;height:15px;background:#fff"></i><i style="left:0px;top:14px;width:15px;height:1px;background:#808080"></i><i style="left:14px;top:0px;width:1px;height:15px;background:#808080"></i><i style="left:2px;top:13px;width:13px;height:1px;background:#808080"></i><i style="left:13px;top:2px;width:1px;height:13px;background:#808080"></i><i style="left:10px;top:7px;width:1px;height:1px;background:#000"></i><i style="left:9px;top:6px;width:1px;height:3px;background:#000"></i><i style="left:8px;top:5px;width:1px;height:5px;background:#000"></i><i style="left:7px;top:4px;width:1px;height:7px;background:#000"></i><i style="left:6px;top:6px;width:1px;height:3px;background:#000"></i><i style="left:5px;top:6px;width:1px;height:3px;background:#000"></i><i style="left:4px;top:6px;width:1px;height:3px;background:#000"></i></div><div style="left:309px;top:166px;width:15px;height:15px;background:#c0c0c0;"></div></div></div></div></div>
<div class="child" style="left:78px;top:108px;width:530px;height:281px;background:#000"><div style="left:1px;top:1px;width:528px;height:279px;background:#c80000;"></div><div style="left:3px;top:3px;width:524px;height:275px;background:#000;"></div><div style="left:22px;top:1px;width:1px;height:2px;background:#000;"></div><div style="left:22px;top:278px;width:1px;height:2px;background:#000;"></div><div style="left:507px;top:1px;width:1px;height:2px;background:#000;"></div><div style="left:507px;top:278px;width:1px;height:2px;background:#000;"></div><div style="left:1px;top:22px;width:2px;height:1px;background:#000;"></div><div style="left:527px;top:22px;width:2px;height:1px;background:#000;"></div><div style="left:1px;top:258px;width:2px;height:1px;background:#000;"></div><div style="left:527px;top:258px;width:2px;height:1px;background:#000;"></div><div class="clip" style="left:4px;top:4px;width:522px;height:273px"><div style="left:-4px;top:-4px;width:530px;height:281px"><div style="left:4px;top:4px;width:522px;height:273px;background:#c0c0c0;"></div><div style="left:4px;top:4px;width:18px;height:18px;background:#c0c0c0;"></div><div style="left:11px;top:12px;width:7px;height:3px;background:#808080;"></div><div style="left:10px;top:11px;width:7px;height:3px;background:#000;"></div><div style="left:11px;top:12px;width:5px;height:1px;background:#fff;"></div><div style="left:22px;top:4px;width:1px;height:18px;background:#000;"></div><div style="left:23px;top:4px;width:465px;height:18px;background:#0000be;"></div><span class="ct" style="color:#fff;left:63.25px;top:4.7px;transform:scaleX(0.948);transform-origin:0 0">&lt;2&gt;</span><span class="ct" style="color:#fff;left:90.75px;top:4.7px;transform:scaleX(0.932);transform-origin:0 0">Browser:</span><span class="ct" style="color:#fff;left:155.75px;top:4.7px;transform:scaleX(0.983);transform-origin:0 0">Difference</span><span class="ct" style="color:#fff;left:225.75px;top:4.7px;transform:scaleX(1.015);transform-origin:0 0">Between</span><span class="ct" style="color:#fff;left:286.25px;top:4.7px;transform:scaleX(0.926);transform-origin:0 0">Cap</span><span class="ct" style="color:#fff;left:315.00px;top:4.7px;transform:scaleX(0.951);transform-origin:0 0">and</span><span class="ct" style="color:#fff;left:342.50px;top:4.7px;transform:scaleX(1.027);transform-origin:0 0">Traditional</span><span class="ct" style="color:#fff;left:416.50px;top:4.7px;transform:scaleX(1.001);transform-origin:0 0">Skis</span><div style="left:488px;top:4px;width:1px;height:18px;background:#000;"></div><div class="rb" style="left:489px;top:4px;width:18px;height:18px;"><i style="left:0;top:0;width:18px;height:1px;background:#fff"></i><i style="left:0;top:0;width:1px;height:18px;background:#fff"></i><i style="left:0px;top:17px;width:18px;height:1px;background:#808080"></i><i style="left:17px;top:0px;width:1px;height:18px;background:#808080"></i><i style="left:2px;top:16px;width:16px;height:1px;background:#808080"></i><i style="left:16px;top:2px;width:1px;height:16px;background:#808080"></i><i style="left:5px;top:7px;width:7px;height:1px;background:#000"></i><i style="left:6px;top:8px;width:5px;height:1px;background:#000"></i><i style="left:7px;top:9px;width:3px;height:1px;background:#000"></i><i style="left:8px;top:10px;width:1px;height:1px;background:#000"></i></div><div style="left:507px;top:4px;width:1px;height:18px;background:#000;"></div><div class="rb" style="left:508px;top:4px;width:18px;height:18px;"><i style="left:0;top:0;width:18px;height:1px;background:#fff"></i><i style="left:0;top:0;width:1px;height:18px;background:#fff"></i><i style="left:0px;top:17px;width:18px;height:1px;background:#808080"></i><i style="left:17px;top:0px;width:1px;height:18px;background:#808080"></i><i style="left:2px;top:16px;width:16px;height:1px;background:#808080"></i><i style="left:16px;top:2px;width:1px;height:16px;background:#808080"></i><i style="left:8px;top:6px;width:1px;height:1px;background:#000"></i><i style="left:7px;top:7px;width:3px;height:1px;background:#000"></i><i style="left:6px;top:8px;width:5px;height:1px;background:#000"></i><i style="left:5px;top:9px;width:7px;height:1px;background:#000"></i></div><div style="left:4px;top:22px;width:522px;height:1px;background:#000;"></div><span class="lbl" style="left:8px;top:28px">URL:</span><div style="left:47px;top:25px;width:387px;height:23px;background:#808080;"></div><div style="left:48px;top:26px;width:386px;height:22px;background:#000;"></div><div style="left:49px;top:27px;width:385px;height:21px;background:#fff;"></div><div style="left:48px;top:46px;width:386px;height:1px;background:#dfdfdf;"></div><div style="left:47px;top:47px;width:387px;height:1px;background:#fff;"></div><div style="left:433px;top:26px;width:1px;height:22px;background:#fff;"></div><div style="left:49px;top:27px;width:384px;height:19px;background:#fff;"></div><span class="url" style="left:51.30px;top:28px;transform:scaleX(0.870);transform-origin:0 0">http:</span><span class="url" style="left:78.60px;top:28px;transform:scaleX(1.511);transform-origin:0 0">///</span><span class="url" style="left:96.60px;top:28px;transform:scaleX(0.846);transform-origin:0 0">C:</span><span class="url" style="left:110.00px;top:28px;transform:scaleX(1.291);transform-origin:0 0">/</span><span class="url" style="left:116.30px;top:28px;transform:scaleX(0.797);transform-origin:0 0">NOTES</span><span class="url" style="left:153.70px;top:28px;transform:scaleX(1.621);transform-origin:0 0">/</span><span class="url" style="left:161.30px;top:28px;transform:scaleX(0.901);transform-origin:0 0">HTML</span><span class="url" style="left:195.00px;top:28px;transform:scaleX(1.484);transform-origin:0 0">/</span><span class="url" style="left:202.00px;top:28px;transform:scaleX(0.875);transform-origin:0 0">SAMPLE</span><span class="url" style="left:250.40px;top:28px;transform:scaleX(1.703);transform-origin:0 0">/</span><span class="url" style="left:257.70px;top:28px;transform:scaleX(0.695);transform-origin:0 0">SKI</span><span class="url" style="left:273.97px;top:28px;transform:scaleX(1.324);transform-origin:0 0">_</span><span class="url" style="left:285.40px;top:28px;transform:scaleX(0.779);transform-origin:0 0">DES</span><span class="url" style="left:308.40px;top:28px;transform:scaleX(0.577);transform-origin:0 0">.</span><span class="url" style="left:312.10px;top:28px;transform:scaleX(0.902);transform-origin:0 0">HTM</span><div class="pb" style="left:442px;top:26px;width:44px;height:23px"><div class="pbi"></div><span class="gl" style="left:5.90px;top:0px;transform:scaleX(0.858);transform-origin:0 0">G</span><span class="gl" style="left:15.90px;top:0px;transform:scaleX(0.782);transform-origin:0 0">o</span><span class="gl" style="left:23.00px;top:0px;transform:scaleX(0.832);transform-origin:0 0">T</span><span class="gl" style="left:30.25px;top:0px;transform:scaleX(0.712);transform-origin:0 0">o</span><i style="left:5px;top:17px;width:10px;height:1px;background:#000"></i></div><div class="pb2" style="left:494px;top:26px;width:44px;height:23px"><div class="pbi2"></div><span>New</span></div><div style="left:4px;top:53px;width:522px;height:1px;background:#000;"></div><div style="left:4px;top:54px;width:150px;height:103px;background:#fff;"></div><div class="clip" style="left:4px;top:54px;width:150px;height:103px"><div style="left:1px;top:1px;width:73px;height:17px;border:1px solid #0000c0;background:#fff"></div><svg class="ic" style="left:4px;top:3px" width="16" height="16" viewBox="0 0 16 16"><path d="M12 3.500 L14.500 3.500 L14.500 14.500 L3.500 14.500 L3 12 L12 12 Z" fill="#ffff00" stroke="#000" stroke-width="1"/><path d="M0.700 3.500 L2.700 0.700 L5.300 3.800 L5.300 12 L3.200 14.300 L0.700 9.500 Z" fill="#fff" stroke="#000" stroke-width="1.100"/><path d="M1.700 4 L1.700 9.300 L3.400 12.600 L4.600 11.600" fill="none" stroke="#ffff00" stroke-width="1.100"/><path d="M6.300 3.800 Q9 1.300 12.300 2.300 L12.300 10.800 Q9 10 6.300 12.200 Z" fill="#fff" stroke="#000" stroke-width="1.100"/><path d="M7.300 8 L7.300 10.500 L10.500 9.700" fill="none" stroke="#b0b0b0" stroke-width="1.200"/></svg><span class="tt" style="left:21.5px;top:1.7px;font-size:10.67px;letter-spacing:0px">Bookmarks</span><svg class="ic" style="left:18.5px;top:22.5px" width="15" height="15" viewBox="0 0 15 15"><circle cx="7.5" cy="7.5" r="7" fill="#0000ff"/><g stroke="#00ffff" stroke-width="1"><path d="M8 2.5h4M6 4.5h7M1 6.5h5M7 6.5h7M1 8.5h4M8 8.5h5M2 10.5h6M9 10.5h3M5 12.5h4"/></g></svg><span class="tt" style="left:36.5px;top:20.7px;font-size:10.67px;letter-spacing:0px">Web Station Information</span><svg class="ic" style="left:19px;top:41px" width="16" height="16" viewBox="0 0 16 16"><path d="M5.600 11.300 L15 7 L15 10.200 L5.600 15 Z" fill="#fff" stroke="#000" stroke-width="1"/><path d="M6.200 12.700 L14.600 8.700 M6.200 14 L14.600 9.900" stroke="#909090" stroke-width="0.900" fill="none"/><path d="M0.600 4.400 L5.600 11.300 L5.600 15 L0.600 8.300 Z" fill="#ffff00" stroke="#000" stroke-width="1.100"/><path d="M0.600 4.400 L7.600 0.500 L15 7 L5.600 11.300 Z" fill="#ffff00" stroke="#000" stroke-width="1.100"/></svg><span class="tt" style="left:36.5px;top:39.7px;font-size:10.67px;letter-spacing:0px">Oracle Corporation</span><svg class="ic" style="left:19px;top:60px" width="16" height="16" viewBox="0 0 16 16"><path d="M5.600 11.300 L15 7 L15 10.200 L5.600 15 Z" fill="#fff" stroke="#000" stroke-width="1"/><path d="M6.200 12.700 L14.600 8.700 M6.200 14 L14.600 9.900" stroke="#909090" stroke-width="0.900" fill="none"/><path d="M0.600 4.400 L5.600 11.300 L5.600 15 L0.600 8.300 Z" fill="#ffff00" stroke="#000" stroke-width="1.100"/><path d="M0.600 4.400 L7.600 0.500 L15 7 L5.600 11.300 Z" fill="#ffff00" stroke="#000" stroke-width="1.100"/></svg><span class="tt" style="left:36.5px;top:58.7px;font-size:10.67px;letter-spacing:0px">Exploring the Net</span><svg class="ic" style="left:19px;top:79px" width="16" height="16" viewBox="0 0 16 16"><path d="M5.600 11.300 L15 7 L15 10.200 L5.600 15 Z" fill="#fff" stroke="#000" stroke-width="1"/><path d="M6.200 12.700 L14.600 8.700 M6.200 14 L14.600 9.900" stroke="#909090" stroke-width="0.900" fill="none"/><path d="M0.600 4.400 L5.600 11.300 L5.600 15 L0.600 8.300 Z" fill="#ffff00" stroke="#000" stroke-width="1.100"/><path d="M0.600 4.400 L7.600 0.500 L15 7 L5.600 11.300 Z" fill="#ffff00" stroke="#000" stroke-width="1.100"/></svg><span class="tt" style="left:36.5px;top:77.7px;font-size:10.67px;letter-spacing:0px">Web Searchers</span></div><div style="left:4px;top:157px;width:150px;height:1px;background:#000;"></div><div style="left:4px;top:158px;width:150px;height:15px;background:#c0c0c0;"></div><div class="rb" style="left:4px;top:158px;width:15px;height:15px;"><i style="left:0;top:0;width:15px;height:1px;background:#fff"></i><i style="left:0;top:0;width:1px;height:15px;background:#fff"></i><i style="left:0px;top:14px;width:15px;height:1px;background:#808080"></i><i style="left:14px;top:0px;width:1px;height:15px;background:#808080"></i><i style="left:2px;top:13px;width:13px;height:1px;background:#808080"></i><i style="left:13px;top:2px;width:1px;height:13px;background:#808080"></i><i style="left:4px;top:7px;width:1px;height:1px;background:#000"></i><i style="left:5px;top:6px;width:1px;height:3px;background:#000"></i><i style="left:6px;top:5px;width:1px;height:5px;background:#000"></i><i style="left:7px;top:4px;width:1px;height:7px;background:#000"></i><i style="left:8px;top:6px;width:1px;height:3px;background:#000"></i><i style="left:9px;top:6px;width:1px;height:3px;background:#000"></i><i style="left:10px;top:6px;width:1px;height:3px;background:#000"></i></div><div style="left:19px;top:158px;width:1px;height:15px;background:#000;"></div><div class="rb" style="left:20px;top:158px;width:15px;height:15px;"><i style="left:0;top:0;width:15px;height:1px;background:#fff"></i><i style="left:0;top:0;width:1px;height:15px;background:#fff"></i><i style="left:0px;top:14px;width:15px;height:1px;background:#808080"></i><i style="left:14px;top:0px;width:1px;height:15px;background:#808080"></i><i style="left:2px;top:13px;width:13px;height:1px;background:#808080"></i><i style="left:13px;top:2px;width:1px;height:13px;background:#808080"></i></div><div style="left:35px;top:158px;width:1px;height:15px;background:#000;"></div><div style="left:138px;top:158px;width:1px;height:15px;background:#000;"></div><div class="rb" style="left:139px;top:158px;width:15px;height:15px;"><i style="left:0;top:0;width:15px;height:1px;background:#fff"></i><i style="left:0;top:0;width:1px;height:15px;background:#fff"></i><i style="left:0px;top:14px;width:15px;height:1px;background:#808080"></i><i style="left:14px;top:0px;width:1px;height:15px;background:#808080"></i><i style="left:2px;top:13px;width:13px;height:1px;background:#808080"></i><i style="left:13px;top:2px;width:1px;height:13px;background:#808080"></i><i style="left:10px;top:7px;width:1px;height:1px;background:#000"></i><i style="left:9px;top:6px;width:1px;height:3px;background:#000"></i><i style="left:8px;top:5px;width:1px;height:5px;background:#000"></i><i style="left:7px;top:4px;width:1px;height:7px;background:#000"></i><i style="left:6px;top:6px;width:1px;height:3px;background:#000"></i><i style="left:5px;top:6px;width:1px;height:3px;background:#000"></i><i style="left:4px;top:6px;width:1px;height:3px;background:#000"></i></div><div style="left:4px;top:173px;width:150px;height:1px;background:#000;"></div><div style="left:4px;top:174px;width:150px;height:1px;background:#fff;"></div><div style="left:4px;top:175px;width:150px;height:3px;background:#c0c0c0;"></div><div style="left:4px;top:178px;width:150px;height:1px;background:#000;"></div><div class="clip" style="left:4px;top:179px;width:150px;height:79px;background:#fff"><div style="left:1px;top:1px;width:109px;height:17px;border:1px solid #0000c0"></div><svg class="ic" style="left:3.5px;top:3.5px" width="15" height="15" viewBox="0 0 15 15"><circle cx="7.5" cy="7.5" r="7" fill="#0000ff"/><g stroke="#00ffff" stroke-width="1"><path d="M8 2.5h4M6 4.5h7M1 6.5h5M7 6.5h7M1 8.5h4M8 8.5h5M2 10.5h6M9 10.5h3M5 12.5h4"/></g></svg><span class="tt" style="left:24.5px;top:1.2px;font-size:10.67px">How to build Skis</span><div style="left:134px;top:0px;width:1px;height:79px;background:#000;"></div><div style="left:135px;top:0px;width:15px;height:63px;background:#c0c0c0;"></div><div class="rb" style="left:135px;top:0px;width:15px;height:15px;"><i style="left:0;top:0;width:15px;height:1px;background:#fff"></i><i style="left:0;top:0;width:1px;height:15px;background:#fff"></i><i style="left:0px;top:14px;width:15px;height:1px;background:#808080"></i><i style="left:14px;top:0px;width:1px;height:15px;background:#808080"></i><i style="left:2px;top:13px;width:13px;height:1px;background:#808080"></i><i style="left:13px;top:2px;width:1px;height:13px;background:#808080"></i><i style="left:7px;top:4px;width:1px;height:1px;background:#000"></i><i style="left:6px;top:5px;width:3px;height:1px;background:#000"></i><i style="left:5px;top:6px;width:5px;height:1px;background:#000"></i><i style="left:4px;top:7px;width:7px;height:1px;background:#000"></i><i style="left:6px;top:8px;width:3px;height:1px;background:#000"></i><i style="left:6px;top:9px;width:3px;height:1px;background:#000"></i><i style="left:6px;top:10px;width:3px;height:1px;background:#000"></i></div><div style="left:135px;top:15px;width:15px;height:1px;background:#000;"></div><div class="rb" style="left:135px;top:32px;width:15px;height:15px;"><i style="left:0;top:0;width:15px;height:1px;background:#fff"></i><i style="left:0;top:0;width:1px;height:15px;background:#fff"></i><i style="left:0px;top:14px;width:15px;height:1px;background:#808080"></i><i style="left:14px;top:0px;width:1px;height:15px;background:#808080"></i><i style="left:2px;top:13px;width:13px;height:1px;background:#808080"></i><i style="left:13px;top:2px;width:1px;height:13px;background:#808080"></i></div><div style="left:135px;top:31px;width:15px;height:1px;background:#000;"></div><div style="left:135px;top:47px;width:15px;height:1px;background:#000;"></div><div style="left:135px;top:47px;width:15px;height:1px;background:#000;"></div><div class="rb" style="left:135px;top:48px;width:15px;height:15px;"><i style="left:0;top:0;width:15px;height:1px;background:#fff"></i><i style="left:0;top:0;width:1px;height:15px;background:#fff"></i><i style="left:0px;top:14px;width:15px;height:1px;background:#808080"></i><i style="left:14px;top:0px;width:1px;height:15px;background:#808080"></i><i style="left:2px;top:13px;width:13px;height:1px;background:#808080"></i><i style="left:13px;top:2px;width:1px;height:13px;background:#808080"></i><i style="left:7px;top:10px;width:1px;height:1px;background:#000"></i><i style="left:6px;top:9px;width:3px;height:1px;background:#000"></i><i style="left:5px;top:8px;width:5px;height:1px;background:#000"></i><i style="left:4px;top:7px;width:7px;height:1px;background:#000"></i><i style="left:6px;top:6px;width:3px;height:1px;background:#000"></i><i style="left:6px;top:5px;width:3px;height:1px;background:#000"></i><i style="left:6px;top:4px;width:3px;height:1px;background:#000"></i></div><div style="left:0px;top:63px;width:150px;height:1px;background:#000;"></div><div style="left:0px;top:64px;width:134px;height:15px;background:#c0c0c0;"></div><div class="rb" style="left:0px;top:64px;width:15px;height:15px;"><i style="left:0;top:0;width:15px;height:1px;background:#fff"></i><i style="left:0;top:0;width:1px;height:15px;background:#fff"></i><i style="left:0px;top:14px;width:15px;height:1px;background:#808080"></i><i style="left:14px;top:0px;width:1px;height:15px;background:#808080"></i><i style="left:2px;top:13px;width:13px;height:1px;background:#808080"></i><i style="left:13px;top:2px;width:1px;height:13px;background:#808080"></i><i style="left:4px;top:7px;width:1px;height:1px;background:#000"></i><i style="left:5px;top:6px;width:1px;height:3px;background:#000"></i><i style="left:6px;top:5px;width:1px;height:5px;background:#000"></i><i style="left:7px;top:4px;width:1px;height:7px;background:#000"></i><i style="left:8px;top:6px;width:1px;height:3px;background:#000"></i><i style="left:9px;top:6px;width:1px;height:3px;background:#000"></i><i style="left:10px;top:6px;width:1px;height:3px;background:#000"></i></div><div style="left:15px;top:64px;width:1px;height:15px;background:#000;"></div><div class="rb" style="left:16px;top:64px;width:15px;height:15px;"><i style="left:0;top:0;width:15px;height:1px;background:#fff"></i><i style="left:0;top:0;width:1px;height:15px;background:#fff"></i><i style="left:0px;top:14px;width:15px;height:1px;background:#808080"></i><i style="left:14px;top:0px;width:1px;height:15px;background:#808080"></i><i style="left:2px;top:13px;width:13px;height:1px;background:#808080"></i><i style="left:13px;top:2px;width:1px;height:13px;background:#808080"></i></div><div style="left:31px;top:64px;width:1px;height:15px;background:#000;"></div><div style="left:118px;top:64px;width:1px;height:15px;background:#000;"></div><div class="rb" style="left:119px;top:64px;width:15px;height:15px;"><i style="left:0;top:0;width:15px;height:1px;background:#fff"></i><i style="left:0;top:0;width:1px;height:15px;background:#fff"></i><i style="left:0px;top:14px;width:15px;height:1px;background:#808080"></i><i style="left:14px;top:0px;width:1px;height:15px;background:#808080"></i><i style="left:2px;top:13px;width:13px;height:1px;background:#808080"></i><i style="left:13px;top:2px;width:1px;height:13px;background:#808080"></i><i style="left:10px;top:7px;width:1px;height:1px;background:#000"></i><i style="left:9px;top:6px;width:1px;height:3px;background:#000"></i><i style="left:8px;top:5px;width:1px;height:5px;background:#000"></i><i style="left:7px;top:4px;width:1px;height:7px;background:#000"></i><i style="left:6px;top:6px;width:1px;height:3px;background:#000"></i><i style="left:5px;top:6px;width:1px;height:3px;background:#000"></i><i style="left:4px;top:6px;width:1px;height:3px;background:#000"></i></div><div style="left:134px;top:64px;width:1px;height:15px;background:#000;"></div><div style="left:135px;top:63px;width:15px;height:1px;background:#000;"></div><div style="left:135px;top:64px;width:15px;height:15px;background:#c0c0c0;"></div></div><div style="left:4px;top:258px;width:522px;height:1px;background:#000;"></div><div style="left:4px;top:259px;width:522px;height:18px;background:#c0c0c0;"></div><div style="left:12px;top:260px;width:512px;height:1px;background:#808080;"></div><div style="left:12px;top:260px;width:1px;height:16px;background:#808080;"></div><div style="left:12px;top:275px;width:512px;height:1px;background:#fff;"></div><div style="left:523px;top:260px;width:1px;height:16px;background:#fff;"></div><div style="left:154px;top:54px;width:1px;height:204px;background:#000;"></div><div style="left:155px;top:54px;width:1px;height:204px;background:#fff;"></div><div style="left:156px;top:54px;width:3px;height:204px;background:#c0c0c0;"></div><div style="left:159px;top:54px;width:1px;height:204px;background:#000;"></div><div style="left:160px;top:54px;width:366px;height:204px;background:#c0c0c0;"></div><div class="clip" style="left:167px;top:61px;width:353px;height:191px;background:#000"><div style="left:1px;top:1px;width:351px;height:189px;background:#c0c0c0;"></div><div style="left:1px;top:1px;width:351px;height:3px;background:#fff;"></div><div style="left:1px;top:1px;width:3px;height:189px;background:#fff;"></div><div style="left:350px;top:2px;width:2px;height:188px;background:#808080;"></div><div style="left:2px;top:187px;width:350px;height:3px;background:#808080;"></div><div style="left:350px;top:1px;width:2px;height:1px;background:#fff;"></div><div style="left:350px;top:2px;width:1px;height:1px;background:#fff;"></div><div style="left:1px;top:187px;width:1px;height:3px;background:#fff;"></div><div style="left:2px;top:188px;width:1px;height:2px;background:#fff;"></div><div style="left:5px;top:5px;width:342px;height:180px;background:#000;"></div><div style="left:6px;top:6px;width:340px;height:178px;background:#c0c0c0;"></div><div class="clip" style="left:6px;top:6px;width:324px;height:162px;background:#c0c0c0"><span class="h1" style="left:5.5px;top:6px">The differences between</span><span class="h1" style="left:5.5px;top:36px;letter-spacing:0.13px">Cap and Traditional Skis</span><span class="bd" style="left:6px;top:71.20px;letter-spacing:0px">In the past couple of years the "Cap" ski has become</span><span class="bd" style="left:6px;top:88.25px;letter-spacing:0px">rather popular thanks to the marketing efforts of</span><span class="bd" style="left:6px;top:105.30px;letter-spacing:0px">Salomon. Having really slick graphics hasn't hurt the</span><span class="bd" style="left:6px;top:122.35px;letter-spacing:0px">skis either. The real question, however, is are they</span><span class="bd" style="left:6px;top:139.40px;letter-spacing:0px">better than traditionally constructed skis? In short, No.</span></div><div style="left:330px;top:6px;width:1px;height:178px;background:#000;"></div><div style="left:331px;top:6px;width:15px;height:162px;background:#c0c0c0;"></div><div class="rb" style="left:331px;top:6px;width:15px;height:15px;"><i style="left:0;top:0;width:15px;height:1px;background:#fff"></i><i style="left:0;top:0;width:1px;height:15px;background:#fff"></i><i style="left:0px;top:14px;width:15px;height:1px;background:#808080"></i><i style="left:14px;top:0px;width:1px;height:15px;background:#808080"></i><i style="left:2px;top:13px;width:13px;height:1px;background:#808080"></i><i style="left:13px;top:2px;width:1px;height:13px;background:#808080"></i><i style="left:7px;top:4px;width:1px;height:1px;background:#000"></i><i style="left:6px;top:5px;width:3px;height:1px;background:#000"></i><i style="left:5px;top:6px;width:5px;height:1px;background:#000"></i><i style="left:4px;top:7px;width:7px;height:1px;background:#000"></i><i style="left:6px;top:8px;width:3px;height:1px;background:#000"></i><i style="left:6px;top:9px;width:3px;height:1px;background:#000"></i><i style="left:6px;top:10px;width:3px;height:1px;background:#000"></i></div><div style="left:331px;top:21px;width:15px;height:1px;background:#000;"></div><div class="rb" style="left:331px;top:22px;width:15px;height:15px;"><i style="left:0;top:0;width:15px;height:1px;background:#fff"></i><i style="left:0;top:0;width:1px;height:15px;background:#fff"></i><i style="left:0px;top:14px;width:15px;height:1px;background:#808080"></i><i style="left:14px;top:0px;width:1px;height:15px;background:#808080"></i><i style="left:2px;top:13px;width:13px;height:1px;background:#808080"></i><i style="left:13px;top:2px;width:1px;height:13px;background:#808080"></i></div><div style="left:331px;top:37px;width:15px;height:1px;background:#000;"></div><div style="left:331px;top:152px;width:15px;height:1px;background:#000;"></div><div class="rb" style="left:331px;top:153px;width:15px;height:15px;"><i style="left:0;top:0;width:15px;height:1px;background:#fff"></i><i style="left:0;top:0;width:1px;height:15px;background:#fff"></i><i style="left:0px;top:14px;width:15px;height:1px;background:#808080"></i><i style="left:14px;top:0px;width:1px;height:15px;background:#808080"></i><i style="left:2px;top:13px;width:13px;height:1px;background:#808080"></i><i style="left:13px;top:2px;width:1px;height:13px;background:#808080"></i><i style="left:7px;top:10px;width:1px;height:1px;background:#000"></i><i style="left:6px;top:9px;width:3px;height:1px;background:#000"></i><i style="left:5px;top:8px;width:5px;height:1px;background:#000"></i><i style="left:4px;top:7px;width:7px;height:1px;background:#000"></i><i style="left:6px;top:6px;width:3px;height:1px;background:#000"></i><i style="left:6px;top:5px;width:3px;height:1px;background:#000"></i><i style="left:6px;top:4px;width:3px;height:1px;background:#000"></i></div><div style="left:6px;top:168px;width:340px;height:1px;background:#000;"></div><div style="left:6px;top:169px;width:324px;height:15px;background:#c0c0c0;"></div><div class="rb" style="left:6px;top:169px;width:15px;height:15px;"><i style="left:0;top:0;width:15px;height:1px;background:#fff"></i><i style="left:0;top:0;width:1px;height:15px;background:#fff"></i><i style="left:0px;top:14px;width:15px;height:1px;background:#808080"></i><i style="left:14px;top:0px;width:1px;height:15px;background:#808080"></i><i style="left:2px;top:13px;width:13px;height:1px;background:#808080"></i><i style="left:13px;top:2px;width:1px;height:13px;background:#808080"></i><i style="left:4px;top:7px;width:1px;height:1px;background:#000"></i><i style="left:5px;top:6px;width:1px;height:3px;background:#000"></i><i style="left:6px;top:5px;width:1px;height:5px;background:#000"></i><i style="left:7px;top:4px;width:1px;height:7px;background:#000"></i><i style="left:8px;top:6px;width:1px;height:3px;background:#000"></i><i style="left:9px;top:6px;width:1px;height:3px;background:#000"></i><i style="left:10px;top:6px;width:1px;height:3px;background:#000"></i></div><div style="left:21px;top:169px;width:1px;height:15px;background:#000;"></div><div class="rb" style="left:22px;top:169px;width:15px;height:15px;"><i style="left:0;top:0;width:15px;height:1px;background:#fff"></i><i style="left:0;top:0;width:1px;height:15px;background:#fff"></i><i style="left:0px;top:14px;width:15px;height:1px;background:#808080"></i><i style="left:14px;top:0px;width:1px;height:15px;background:#808080"></i><i style="left:2px;top:13px;width:13px;height:1px;background:#808080"></i><i style="left:13px;top:2px;width:1px;height:13px;background:#808080"></i></div><div style="left:37px;top:169px;width:1px;height:15px;background:#000;"></div><div style="left:314px;top:169px;width:1px;height:15px;background:#000;"></div><div class="rb" style="left:315px;top:169px;width:15px;height:15px;"><i style="left:0;top:0;width:15px;height:1px;background:#fff"></i><i style="left:0;top:0;width:1px;height:15px;background:#fff"></i><i style="left:0px;top:14px;width:15px;height:1px;background:#808080"></i><i style="left:14px;top:0px;width:1px;height:15px;background:#808080"></i><i style="left:2px;top:13px;width:13px;height:1px;background:#808080"></i><i style="left:13px;top:2px;width:1px;height:13px;background:#808080"></i><i style="left:10px;top:7px;width:1px;height:1px;background:#000"></i><i style="left:9px;top:6px;width:1px;height:3px;background:#000"></i><i style="left:8px;top:5px;width:1px;height:5px;background:#000"></i><i style="left:7px;top:4px;width:1px;height:7px;background:#000"></i><i style="left:6px;top:6px;width:1px;height:3px;background:#000"></i><i style="left:5px;top:6px;width:1px;height:3px;background:#000"></i><i style="left:4px;top:6px;width:1px;height:3px;background:#000"></i></div><div style="left:331px;top:169px;width:15px;height:15px;background:#c0c0c0;"></div></div></div></div></div>
</div>
<div style="left:0px;top:461px;width:640px;height:1px;background:#000;"></div>
<div style="left:0px;top:462px;width:640px;height:18px;background:#c0c0c0;"></div>
<div style="left:8px;top:463px;width:519px;height:1px;background:#808080;"></div><div style="left:8px;top:463px;width:1px;height:16px;background:#808080;"></div><div style="left:8px;top:478px;width:519px;height:1px;background:#fff;"></div><div style="left:526px;top:463px;width:1px;height:16px;background:#fff;"></div>
<div style="left:529px;top:463px;width:32px;height:1px;background:#808080;"></div><div style="left:529px;top:463px;width:1px;height:16px;background:#808080;"></div><div style="left:529px;top:478px;width:32px;height:1px;background:#fff;"></div><div style="left:560px;top:463px;width:1px;height:16px;background:#fff;"></div>
<div style="left:563px;top:463px;width:35px;height:1px;background:#808080;"></div><div style="left:563px;top:463px;width:1px;height:16px;background:#808080;"></div><div style="left:563px;top:478px;width:35px;height:1px;background:#fff;"></div><div style="left:597px;top:463px;width:1px;height:16px;background:#fff;"></div>
<div style="left:600px;top:463px;width:39px;height:1px;background:#808080;"></div><div style="left:600px;top:463px;width:1px;height:16px;background:#808080;"></div><div style="left:600px;top:478px;width:39px;height:1px;background:#fff;"></div><div style="left:638px;top:463px;width:1px;height:16px;background:#fff;"></div>
<span class="st" style="left:11px;top:463px" id="ready">Ready</span>
<span class="st" style="left:565px;top:463px" id="num">NUM</span>
</div></body></html>
